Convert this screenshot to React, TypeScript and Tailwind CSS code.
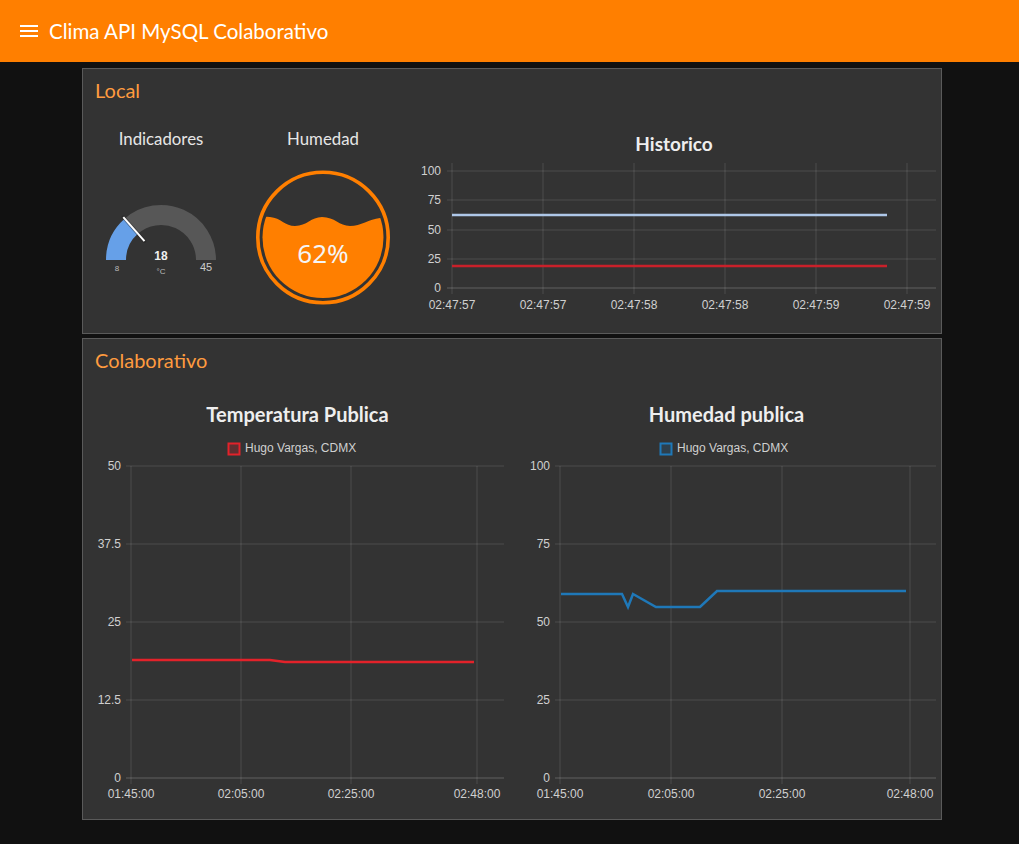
import React from "react";

const grid = "rgba(255,255,255,0.13)";
const lbl = "#d0d0d0";

function Gauge() {
  const cx = 78, cy = 112;
  return (
    <svg width="156" height="140" className="block">
      <path d={`M ${cx - 55} ${cy} A 55 55 0 0 1 41.63 70.74 L 54.85 85.75 A 35 35 0 0 0 ${cx - 35} ${cy} Z`} fill="#66a0e8" />
      <path d={`M 41.63 70.74 A 55 55 0 0 1 ${cx + 55} ${cy} L ${cx + 35} ${cy} A 35 35 0 0 0 54.85 85.75 Z`} fill="#575757" />
      <line x1="40.3" y1="69.2" x2="61.5" y2="93.2" stroke="#222" strokeWidth="3.5" strokeLinecap="round" opacity="0.5" />
      <line x1="40.3" y1="69.2" x2="61.5" y2="93.2" stroke="#ffffff" strokeWidth="2" />
      <text x={cx} y={cy} textAnchor="middle" fill="#f0f0f0" fontSize="12" fontWeight="bold" fontFamily="'Liberation Sans', sans-serif">18</text>
      <text x={cx} y={cy + 14} textAnchor="middle" fill="#bbb" fontSize="8" fontFamily="'Liberation Sans', sans-serif">°C</text>
      <text x="34" y={cy + 11} textAnchor="middle" fill="#bbb" fontSize="8" fontFamily="'Liberation Sans', sans-serif">8</text>
      <text x="123" y={cy + 11} textAnchor="middle" fill="#ccc" fontSize="11" fontFamily="'Liberation Sans', sans-serif">45</text>
    </svg>
  );
}

function Humidity() {
  const cx = 84, cy = 89.5;
  return (
    <svg width="168" height="170" className="block">
      <defs>
        <clipPath id="hclip">
          <circle cx={cx} cy={cy} r="60.5" />
        </clipPath>
      </defs>
      <circle cx={cx} cy={cy} r="65.2" fill="none" stroke="#ff7f00" strokeWidth="3.6" />
      <path
        clipPath="url(#hclip)"
        fill="#ff7f00"
        d="M 0 72 C 10 70 20 68 31 69 C 42 70 46 78 56 78 C 68 78 72 69 83 69 C 96 69 100 78 111 78 C 122 78 130 71 141 70 C 150 69 160 66 168 64 L 168 170 L 0 170 Z"
      />
      <text x={cx} y={cy + 25} textAnchor="middle" fill="#f5f5f5" fontSize="26" fontFamily="'Noto Sans', sans-serif">62%</text>
    </svg>
  );
}

function Historico() {
  const ys = [17, 46, 76, 105, 134];
  const yl = ["100", "75", "50", "25", "0"];
  const xs = [45, 136, 227, 318, 409, 500];
  const xl = ["02:47:57", "02:47:57", "02:47:58", "02:47:58", "02:47:59", "02:47:59"];
  return (
    <svg width="534" height="170" className="block" fontFamily="'Liberation Sans', Arial, sans-serif" fontSize="12">
      {ys.map((y, i) => (
        <line key={"h" + i} x1="40" y1={y} x2="529" y2={y} stroke={i === 4 ? "rgba(255,255,255,0.22)" : grid} strokeWidth="1" />
      ))}
      {xs.map((x, i) => (
        <line key={"v" + i} x1={x} y1="9" x2={x} y2="140" stroke={grid} strokeWidth="1" />
      ))}
      {ys.map((y, i) => (
        <text key={"yl" + i} x="34" y={y + 4} textAnchor="end" fill={lbl}>{yl[i]}</text>
      ))}
      {xs.map((x, i) => (
        <text key={"xl" + i} x={x} y="155" textAnchor="middle" fill={lbl}>{xl[i]}</text>
      ))}
      <line x1="45" y1="61" x2="480" y2="61" stroke="#aec7e8" strokeWidth="2.5" />
      <line x1="45" y1="112" x2="480" y2="112" stroke="#c9202a" strokeWidth="2.5" />
    </svg>
  );
}

function PubChart({
  yl,
  xs,
  color,
  fill,
  legendX,
  points,
  right,
}: {
  yl: string[];
  xs: number[];
  color: string;
  fill: string;
  legendX: number;
  points: string;
  right: number;
}) {
  const ys = [42, 120, 198, 276, 354];
  const xl = ["01:45:00", "02:05:00", "02:25:00", "02:48:00"];
  return (
    <svg width="429" height="395" className="block" fontFamily="'Liberation Sans', Arial, sans-serif" fontSize="12">
      <rect x={legendX + 0.5} y="19.5" width="11" height="11" fill={fill} stroke={color} strokeWidth="2" />
      <text x={legendX + 17} y="28" fill={lbl}>Hugo Vargas, CDMX</text>
      {ys.map((y, i) => (
        <line key={"h" + i} x1="43" y1={y} x2={right} y2={y} stroke={i === 4 ? "rgba(255,255,255,0.22)" : grid} strokeWidth="1" />
      ))}
      {xs.map((x, i) => (
        <line key={"v" + i} x1={x} y1="42" x2={x} y2="360" stroke={grid} strokeWidth="1" />
      ))}
      {ys.map((y, i) => (
        <text key={"yl" + i} x="38" y={y + 4} textAnchor="end" fill={lbl}>{yl[i]}</text>
      ))}
      {xs.map((x, i) => (
        <text key={"xl" + i} x={x} y="374" textAnchor="middle" fill={lbl}>{xl[i]}</text>
      ))}
      <polyline points={points} fill="none" stroke={color} strokeWidth="2.5" strokeLinejoin="miter" />
    </svg>
  );
}

export default function App() {
  return (
    <div className="min-h-[844px] bg-[#111111] font-['Lato','Noto_Sans',sans-serif]">
      <header className="h-[62px] bg-[#ff7f00] flex items-center pl-[20px] gap-[11px] text-white">
        <svg width="18" height="14" viewBox="0 0 18 14" className="block">
          <rect x="0" y="1" width="18" height="2" fill="#fff" />
          <rect x="0" y="6" width="18" height="2" fill="#fff" />
          <rect x="0" y="11" width="18" height="2" fill="#fff" />
        </svg>
        <span className="text-[20.5px] leading-none">Clima API MySQL Colaborativo</span>
      </header>
      <main className="pl-[82px] pt-[6px] flex flex-col gap-[4px]">
        <section className="w-[860px] h-[266px] border border-[#5a5a5a] bg-[#333333] flex flex-col">
          <div className="h-[42px] flex items-center pl-[12px] text-[20px] text-[#ff9b3f]">Local</div>
          <div className="flex">
            <div className="w-[156px] flex flex-col items-center">
              <div className="pt-[19px] leading-[18px] text-[16.8px] text-[#e6e6e6]">Indicadores</div>
              <Gauge />
            </div>
            <div className="w-[168px] flex flex-col items-center">
              <div className="pt-[19px] leading-[18px] text-[16.8px] text-[#e6e6e6]">Humedad</div>
              <Humidity />
            </div>
            <div className="w-[534px] flex flex-col">
              <div className="pt-[23px] leading-[20px] text-[19px] font-bold text-[#eeeeee] text-center">Historico</div>
              <Historico />
            </div>
          </div>
        </section>
        <section className="w-[860px] border border-[#5a5a5a] bg-[#333333] flex flex-col">
          <div className="h-[42px] flex items-center pl-[12px] text-[20px] text-[#ff9b3f]">Colaborativo</div>
          <div className="flex">
            <div className="w-[429px] flex flex-col">
              <div className="pt-[23px] leading-[20px] text-[20px] font-bold text-[#eeeeee] text-center">Temperatura Publica</div>
              <PubChart
                yl={["50", "37.5", "25", "12.5", "0"]}
                xs={[48, 158, 268, 394]}
                color="#e3222a"
                fill="rgba(227,34,42,0.25)"
                legendX={145}
                right={421}
                points="49,236 187,236 202,238 391,238"
              />
            </div>
            <div className="w-[429px] flex flex-col">
              <div className="pt-[23px] leading-[20px] text-[20px] font-bold text-[#eeeeee] text-center">Humedad publica</div>
              <PubChart
                yl={["100", "75", "50", "25", "0"]}
                xs={[48, 159, 270, 398]}
                color="#1f78b8"
                fill="rgba(31,120,184,0.2)"
                legendX={148}
                right={424}
                points="49,170 110,170 116,183 121,170 144,183 188,183 205,167 394,167"
              />
            </div>
          </div>
        </section>
      </main>
    </div>
  );
}
